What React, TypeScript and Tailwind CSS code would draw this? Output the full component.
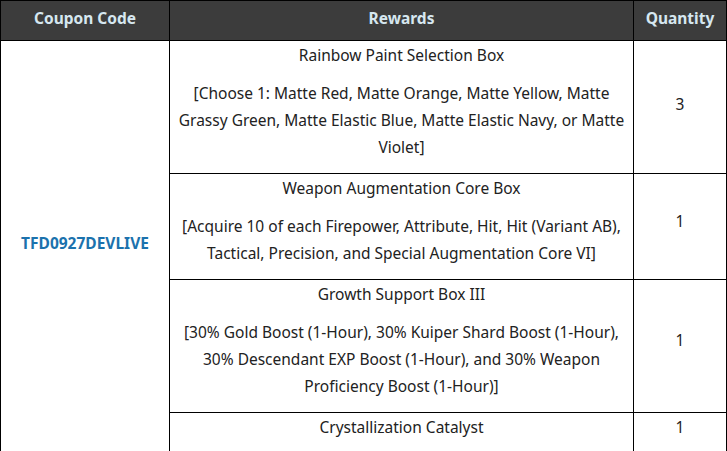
import React from "react";

type Reward = {
    title: string;
    lines: string[];
    qty: number;
    height: string;
};

const rewards: Reward[] = [
    {
        title: "Rainbow Paint Selection Box",
        lines: [
            "[Choose 1: Matte Red, Matte Orange, Matte Yellow, Matte",
            "Grassy Green, Matte Elastic Blue, Matte Elastic Navy, or Matte",
            "Violet]",
        ],
        qty: 3,
        height: "h-[133px]",
    },
    {
        title: "Weapon Augmentation Core Box",
        lines: [
            "[Acquire 10 of each Firepower, Attribute, Hit, Hit (Variant AB),",
            "Tactical, Precision, and Special Augmentation Core VI]",
        ],
        qty: 1,
        height: "h-[106px]",
    },
    {
        title: "Growth Support Box III",
        lines: [
            "[30% Gold Boost (1-Hour), 30% Kuiper Shard Boost (1-Hour),",
            "30% Descendant EXP Boost (1-Hour), and 30% Weapon",
            "Proficiency Boost (1-Hour)]",
        ],
        qty: 1,
        height: "h-[133px]",
    },
    {
        title: "Crystallization Catalyst",
        lines: [],
        qty: 1,
        height: "h-[39px]",
    },
];

const App: React.FC = () => {
    return (
        <div className="bg-white w-[727px] h-[451px] overflow-hidden font-['Noto_Sans',sans-serif] text-[15.5px] leading-[27px] text-[#222]">
            <table className="w-[726px] table-fixed border-collapse">
                <colgroup>
                    <col className="w-[169px]" />
                    <col className="w-[464px]" />
                    <col className="w-[93px]" />
                </colgroup>
                <thead>
                    <tr className="h-[40px] bg-[#3c3c3c] text-[#d6e7f0] text-[15.5px] font-bold">
                        <th className="border border-black pb-[5px]">Coupon Code</th>
                        <th className="border border-black pb-[5px]">Rewards</th>
                        <th className="border border-black pb-[5px]">Quantity</th>
                    </tr>
                </thead>
                <tbody>
                    {rewards.map((r, i) => (
                        <tr key={r.title} className={r.height}>
                            {i === 0 && (
                                <td rowSpan={rewards.length} className="border border-black text-center align-middle">
                                    <p className="mb-[6px] font-bold text-[#1b72ad]">TFD0927DEVLIVE</p>
                                </td>
                            )}
                            <td className="border border-black text-center align-top px-1 pt-[1px] whitespace-nowrap">
                                <p className="mb-[11px]">{r.title}</p>
                                {r.lines.length > 0 && (
                                    <p className="mb-[11px]">
                                        {r.lines.map((l, j) => (
                                            <React.Fragment key={j}>
                                                {j > 0 && <br />}
                                                {l}
                                            </React.Fragment>
                                        ))}
                                    </p>
                                )}
                            </td>
                            <td className="border border-black text-center align-middle">
                                <p className={i === 0 ? "mb-[5px]" : "mb-[11px]"}>{r.qty}</p>
                            </td>
                        </tr>
                    ))}
                </tbody>
            </table>
        </div>
    );
};

export default App;
